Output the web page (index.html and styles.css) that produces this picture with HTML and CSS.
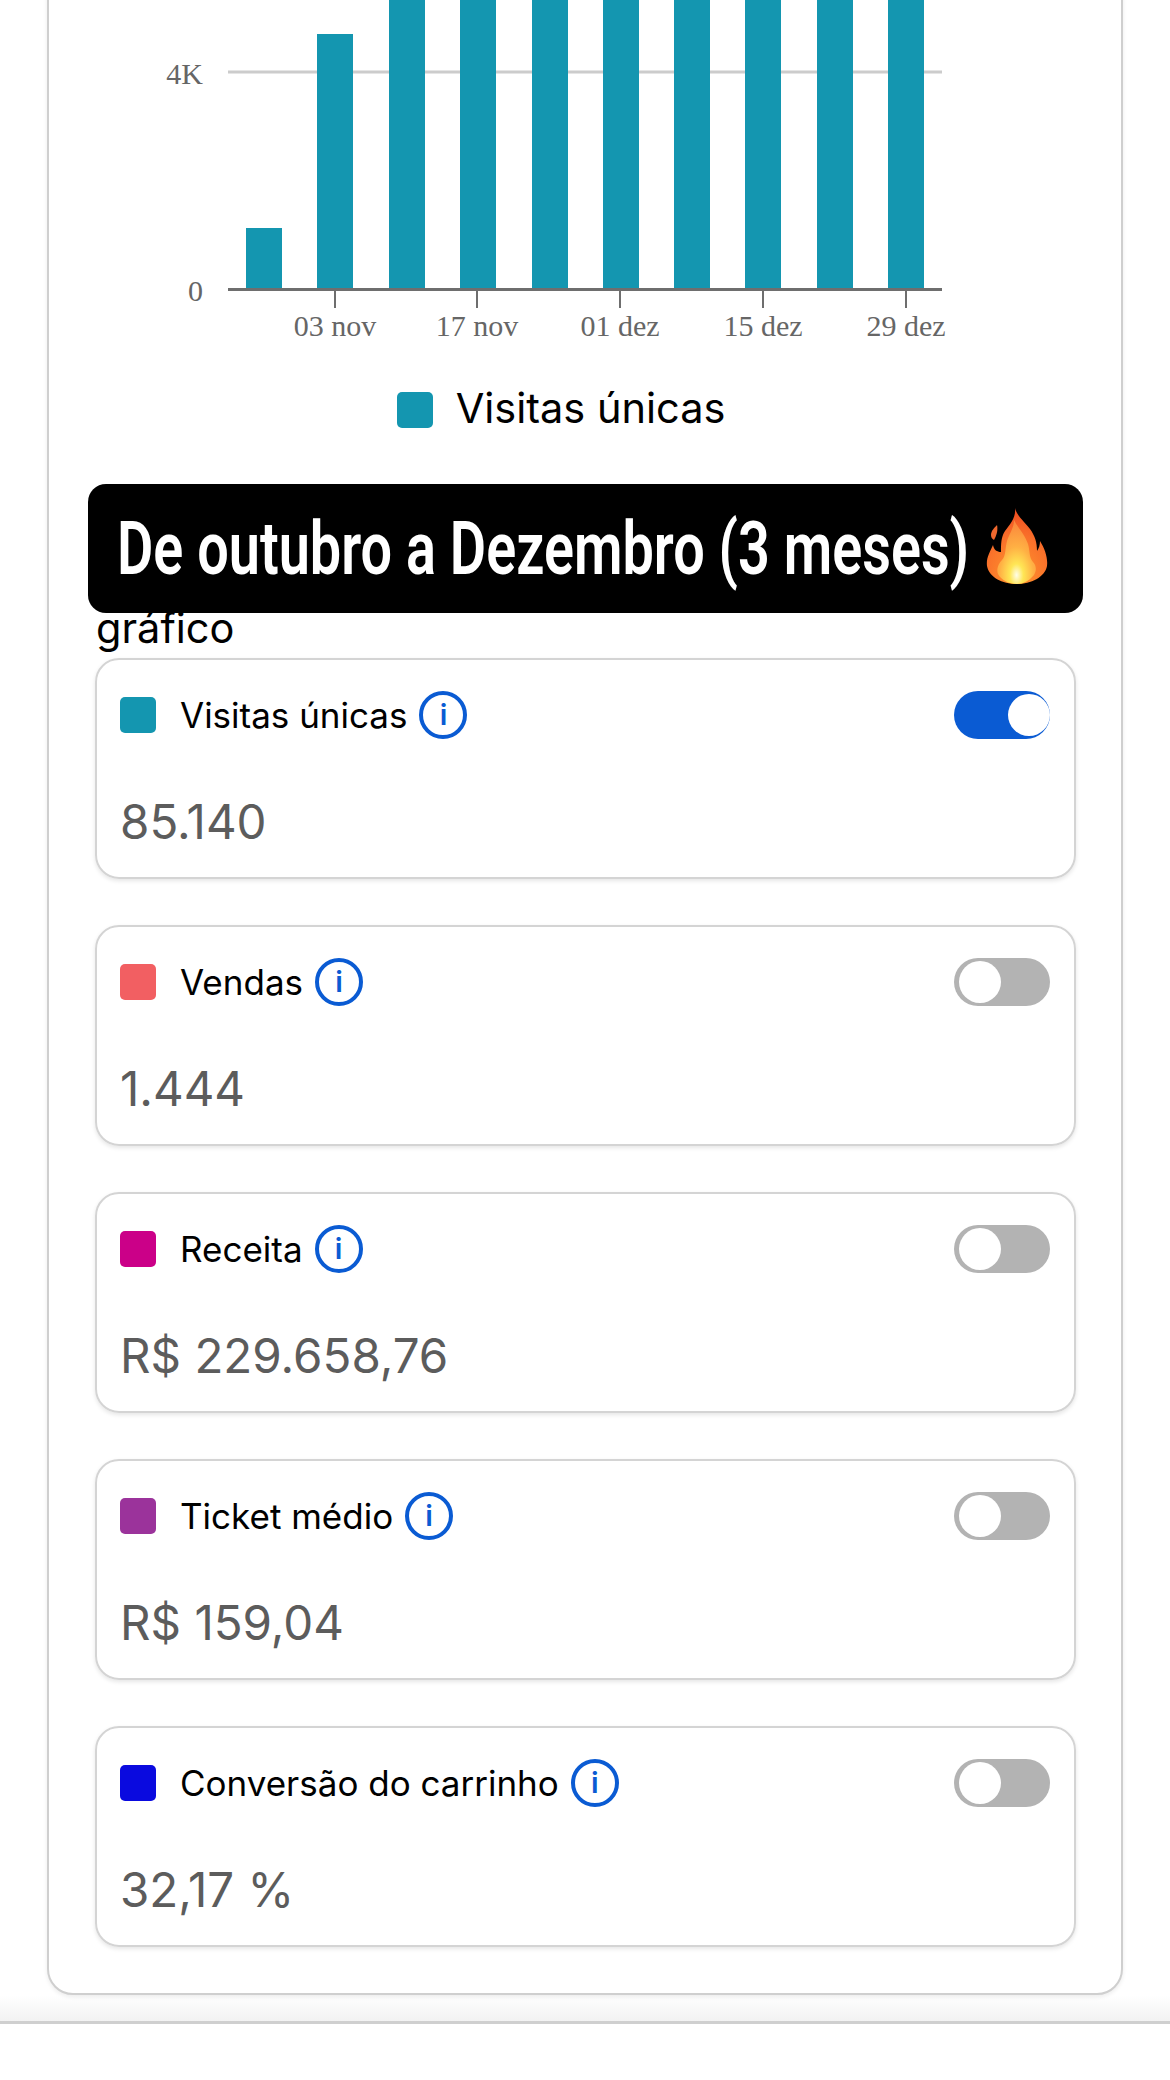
FILE: index.html
```html
<!DOCTYPE html>
<html lang="pt-BR">
<head>
    <meta charset="UTF-8">
    <meta name="viewport" content="width=device-width, initial-scale=1.0">
    <title>Métricas do gráfico</title>
    <link rel="stylesheet" href="styles.css">
</head>
<body>
    <div class="panel">
        <svg class="chart" width="1072" height="360" viewBox="49 0 1072 360">
            <line class="grid" x1="228" y1="72" x2="942" y2="72"/>
            <rect class="bar" x="246" y="228" width="36" height="62"/>
            <rect class="bar" x="317" y="34" width="36" height="256"/>
            <rect class="bar" x="389" y="0" width="36" height="290"/>
            <rect class="bar" x="460" y="0" width="36" height="290"/>
            <rect class="bar" x="532" y="0" width="36" height="290"/>
            <rect class="bar" x="603" y="0" width="36" height="290"/>
            <rect class="bar" x="674" y="0" width="36" height="290"/>
            <rect class="bar" x="745" y="0" width="36" height="290"/>
            <rect class="bar" x="817" y="0" width="36" height="290"/>
            <rect class="bar" x="888" y="0" width="36" height="290"/>
            <line class="axis" x1="228" y1="289.5" x2="942" y2="289.5"/>
            <line class="tick" x1="335" y1="291" x2="335" y2="308"/>
            <line class="tick" x1="477" y1="291" x2="477" y2="308"/>
            <line class="tick" x1="620" y1="291" x2="620" y2="308"/>
            <line class="tick" x1="763" y1="291" x2="763" y2="308"/>
            <line class="tick" x1="906" y1="291" x2="906" y2="308"/>
            <text class="y-label" x="203" y="84">4K</text>
            <text class="y-label" x="203" y="301">0</text>
            <text class="x-label" x="335" y="336">03 nov</text>
            <text class="x-label" x="477" y="336">17 nov</text>
            <text class="x-label" x="620" y="336">01 dez</text>
            <text class="x-label" x="763" y="336">15 dez</text>
            <text class="x-label" x="906" y="336">29 dez</text>
        </svg>

        <div class="legend">
            <span class="legend-mark"></span>
            <span class="legend-text">Visitas únicas</span>
        </div>

        <div class="banner">
            <span class="banner-text">De outubro a Dezembro (3 meses)</span>
            <svg class="flame" width="62" height="77" viewBox="-1 0 62 77">
                <defs>
                    <radialGradient id="flameOuter" cx="50%" cy="90%" r="90%">
                        <stop offset="0" stop-color="#ff9a2e"/>
                        <stop offset="0.6" stop-color="#f9702a"/>
                        <stop offset="1" stop-color="#ef4a20"/>
                    </radialGradient>
                    <radialGradient id="flameInner" cx="50%" cy="86%" r="80%">
                        <stop offset="0" stop-color="#fffde8"/>
                        <stop offset="0.22" stop-color="#ffe655"/>
                        <stop offset="0.55" stop-color="#ffb044"/>
                        <stop offset="1" stop-color="#fb8a3c"/>
                    </radialGradient>
                </defs>
                <path fill="url(#flameOuter)" d="M28 0C30 8 37 13 43 21C48 28 50 34 50 43C52 40 53 37 53 33C58 41 61 50 60 58C58 69 44 76 30 76C15 76 2 69 0 58C-1 50 3 44 6 37C7 42 10 44 14 44C14 36 14 29 18 23C23 16 29 10 28 0Z"/>
                <path fill="url(#flameInner)" d="M27 12C31 20 38 27 41 36C43 43 42 50 46 54C49 57 50 62 47 67C42 73 36 76 30 76C22 76 14 72 11 66C9 61 12 55 15 52C19 48 18 40 20 33C22 26 27 20 27 12Z"/>
                <path fill="#f0682e" d="M4 27C4 23 7 20 10 17C11 21 10 27 7 32C5 31 4 29 4 27Z"/>
            </svg>
        </div>

        <div class="chart-caption">gráfico</div>

        <div class="metric">
            <div class="metric-head">
                <span class="swatch swatch-visits"></span>
                <span class="metric-name">Visitas únicas</span>
                <span class="info">i</span>
                <span class="toggle toggle-on"><span class="knob"></span></span>
            </div>
            <div class="metric-value">85.140</div>
        </div>

        <div class="metric">
            <div class="metric-head">
                <span class="swatch swatch-sales"></span>
                <span class="metric-name">Vendas</span>
                <span class="info">i</span>
                <span class="toggle"><span class="knob"></span></span>
            </div>
            <div class="metric-value">1.444</div>
        </div>

        <div class="metric">
            <div class="metric-head">
                <span class="swatch swatch-revenue"></span>
                <span class="metric-name">Receita</span>
                <span class="info">i</span>
                <span class="toggle"><span class="knob"></span></span>
            </div>
            <div class="metric-value">R$ 229.658,76</div>
        </div>

        <div class="metric">
            <div class="metric-head">
                <span class="swatch swatch-ticket"></span>
                <span class="metric-name">Ticket médio</span>
                <span class="info">i</span>
                <span class="toggle"><span class="knob"></span></span>
            </div>
            <div class="metric-value">R$ 159,04</div>
        </div>

        <div class="metric">
            <div class="metric-head">
                <span class="swatch swatch-cart"></span>
                <span class="metric-name">Conversão do carrinho</span>
                <span class="info">i</span>
                <span class="toggle"><span class="knob"></span></span>
            </div>
            <div class="metric-value">32,17 %</div>
        </div>
    </div>

    <div class="bottom-bar"></div>
</body>
</html>
```

FILE: styles.css
```css
html, body {
    height: 2080px;
    overflow: hidden;
}
body {
    margin: 0;
    background-color: #fff;
    font-family: Inter, Arial, sans-serif;
}
.panel {
    position: relative;
    box-sizing: border-box;
    width: 1076px;
    height: 2025px;
    margin: -30px 0 0 47px;
    padding-top: 28px;
    background: white;
    border: 2px solid #cfcfcf;
    border-radius: 26px;
    box-shadow: 0 2px 4px rgba(0,0,0,0.08);
}
.chart {
    display: block;
}
.bar {
    fill: #1496b0;
}
.grid {
    stroke: #cccccc;
    stroke-width: 3;
}
.axis {
    stroke: #6e6e6e;
    stroke-width: 3;
}
.tick {
    stroke: #6e6e6e;
    stroke-width: 2;
}
.y-label, .x-label {
    font-family: "Liberation Serif", serif;
    font-size: 30px;
    fill: #666;
}
.y-label {
    text-anchor: end;
}
.x-label {
    text-anchor: middle;
}
.legend {
    display: flex;
    align-items: center;
    justify-content: center;
    gap: 23px;
    height: 36px;
    margin-top: 32px;
    padding-right: 48px;
}
.legend-mark {
    width: 36px;
    height: 36px;
    border-radius: 5px;
    background-color: #1496b0;
}
.legend-text {
    margin-top: -4px;
    font-size: 41.5px;
    line-height: 36px;
    color: #000;
}
.banner {
    position: absolute;
    left: 39px;
    top: 512px;
    display: flex;
    align-items: center;
    box-sizing: border-box;
    width: 995px;
    height: 129px;
    padding-left: 29px;
    background-color: #000;
    border-radius: 18px;
}
.banner-text {
    flex: 0 0 850px;
    min-width: 0;
    font-family: Roboto, "Liberation Sans", sans-serif;
    font-size: 74px;
    font-weight: 600;
    color: #fff;
    white-space: nowrap;
    transform: scaleX(0.754);
    transform-origin: left center;
}
.flame {
    flex: none;
    margin: -4px 0 0 19px;
}
.chart-caption {
    height: 40px;
    margin: 180px 0 10px 47px;
    font-size: 41.5px;
    line-height: 40px;
    color: #000;
}
.metric {
    box-sizing: border-box;
    width: 981px;
    height: 221px;
    margin: 0 0 46px 46px;
    padding: 31px 24px 0 23px;
    border: 2px solid #d4d4d4;
    border-radius: 24px;
    box-shadow: 0 2px 4px rgba(0,0,0,0.1);
}
.metric-head {
    display: flex;
    align-items: center;
    height: 48px;
}
.swatch {
    width: 36px;
    height: 36px;
    border-radius: 5px;
    margin-right: 24px;
}
.swatch-visits { background-color: #1496b0; }
.swatch-sales { background-color: #f25f62; }
.swatch-revenue { background-color: #cb0088; }
.swatch-ticket { background-color: #9b339b; }
.swatch-cart { background-color: #0a0adf; }
.metric-name {
    font-size: 35px;
    color: #000;
}
.info {
    box-sizing: border-box;
    width: 48px;
    height: 48px;
    margin-left: 12px;
    border: 4px solid #0a5bd3;
    border-radius: 50%;
    font-size: 29px;
    font-weight: 600;
    line-height: 39px;
    text-align: center;
    color: #0a5bd3;
}
.toggle {
    display: flex;
    align-items: center;
    box-sizing: border-box;
    width: 96px;
    height: 48px;
    margin-left: auto;
    padding: 3px 3px 3px 5px;
    border-radius: 24px;
    background-color: #b3b3b3;
}
.toggle-on {
    justify-content: flex-end;
    padding-right: 0;
    background-color: #0a5bd3;
}
.knob {
    width: 42px;
    height: 42px;
    border-radius: 50%;
    background: white;
}
.metric-value {
    margin-top: 56px;
    font-size: 47.5px;
    line-height: 54px;
    color: #5c5c5c;
}
.bottom-bar {
    height: 26px;
    border-bottom: 3px solid #cfcfcf;
    background: linear-gradient(#ffffff, #f2f2f2);
}
```
